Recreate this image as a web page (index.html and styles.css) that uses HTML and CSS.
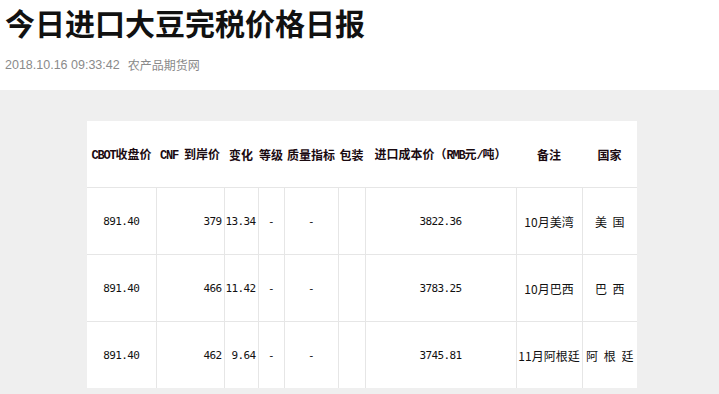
FILE: index.html
```html
<!DOCTYPE html>
<html lang="zh">
<head>
<meta charset="utf-8">
<title>今日进口大豆完税价格日报</title>
<link rel="stylesheet" href="styles.css">
</head>
<body>
<header class="head">
  <h1 class="title">今日进口大豆完税价格日报</h1>
  <div class="meta"><span class="time">2018.10.16 09:33:42</span><span class="source">农产品期货网</span></div>
</header>
<section class="content">
  <table class="price">
    <colgroup>
      <col class="c1"><col class="c2"><col class="c3"><col class="c4"><col class="c5"><col class="c6"><col class="c7"><col class="c8"><col class="c9">
    </colgroup>
    <thead>
      <tr>
        <th><span class="lat">CBOT</span>收盘价</th>
        <th><span class="lat">CNF </span>到岸价</th>
        <th>变化</th>
        <th>等级</th>
        <th>质量指标</th>
        <th>包装</th>
        <th>进口成本价（<span class="lat">RMB</span>元<span class="lat">/</span>吨）</th>
        <th>备注</th>
        <th>国家</th>
      </tr>
    </thead>
    <tbody>
      <tr>
        <td class="num">891.40</td>
        <td class="num right">379</td>
        <td class="num right">13.34</td>
        <td class="num">-</td>
        <td class="num">-</td>
        <td></td>
        <td class="num">3822.36</td>
        <td class="txt">10月美湾</td>
        <td class="txt">美 国</td>
      </tr>
      <tr>
        <td class="num">891.40</td>
        <td class="num right">466</td>
        <td class="num right">11.42</td>
        <td class="num">-</td>
        <td class="num">-</td>
        <td></td>
        <td class="num">3783.25</td>
        <td class="txt">10月巴西</td>
        <td class="txt">巴 西</td>
      </tr>
      <tr>
        <td class="num">891.40</td>
        <td class="num right">462</td>
        <td class="num right">9.64</td>
        <td class="num">-</td>
        <td class="num">-</td>
        <td></td>
        <td class="num">3745.81</td>
        <td class="txt">11月阿根廷</td>
        <td class="txt">阿 根 廷</td>
      </tr>
    </tbody>
  </table>
</section>
</body>
</html>
```
FILE: styles.css
```css
html, body {
  margin: 0;
  padding: 0;
  background: #efefef;
}
body {
  font-family: "Noto Sans CJK SC", sans-serif;
  color: #000;
}
.head {
  background: #fff;
  height: 90px;
  box-sizing: border-box;
  padding: 7px 0 0 5px;
}
.title {
  margin: 0;
  font-size: 30px;
  line-height: 30px;
  font-weight: 700;
  color: #111;
  font-family: "Noto Sans CJK SC", sans-serif;
}
.meta {
  margin-top: 20px;
  font-size: 12.5px;
  line-height: 16px;
  color: #8a8a8a;
  display: flex;
  gap: 8px;
}
.time {
  font-family: "Liberation Sans", Arial, sans-serif;
}
.source {
  font-family: "Noto Sans CJK SC", sans-serif;
  font-size: 12px;
}
.content {
  padding: 31px 0 0 87px;
}
.price {
  width: 550px;
  table-layout: fixed;
  border-collapse: collapse;
  background: #fff;
}
.c1 { width: 69px; }
.c2 { width: 68px; }
.c3 { width: 34px; }
.c4 { width: 26px; }
.c5 { width: 54px; }
.c6 { width: 27px; }
.c7 { width: 151px; }
.c8 { width: 66px; }
.c9 { width: 55px; }
.price th {
  height: 66px;
  padding: 0;
  font-size: 12px;
  font-weight: 700;
  white-space: pre;
  text-align: center;
  vertical-align: middle;
  border: none;
  border-bottom: 1px solid #e6e6e6;
  color: #1a0a10;
  overflow: visible;
}
.price th .lat {
  font-family: "Liberation Mono", monospace;
  font-size: 12px;
  letter-spacing: -1.2px;
  font-weight: 700;
}
.price td {
  height: 66px;
  padding: 0;
  border: 1px solid #e6e6e6;
  text-align: center;
  vertical-align: middle;
  white-space: nowrap;
  font-size: 12px;
}
.price tbody tr:last-child td {
  border-bottom: none;
}
.price tbody td:first-child {
  border-left: none;
}
.price tbody td:last-child {
  border-right: none;
}
.price td.num {
  font-family: "DejaVu Sans Mono", monospace;
  font-size: 11px;
  letter-spacing: -0.6px;
  color: #111;
}
.price td.right {
  text-align: right;
  padding-right: 2px;
}
.price td.txt {
  font-family: "Noto Sans CJK SC", sans-serif;
  font-size: 12px;
  word-spacing: 3px;
  color: #111;
}
```
